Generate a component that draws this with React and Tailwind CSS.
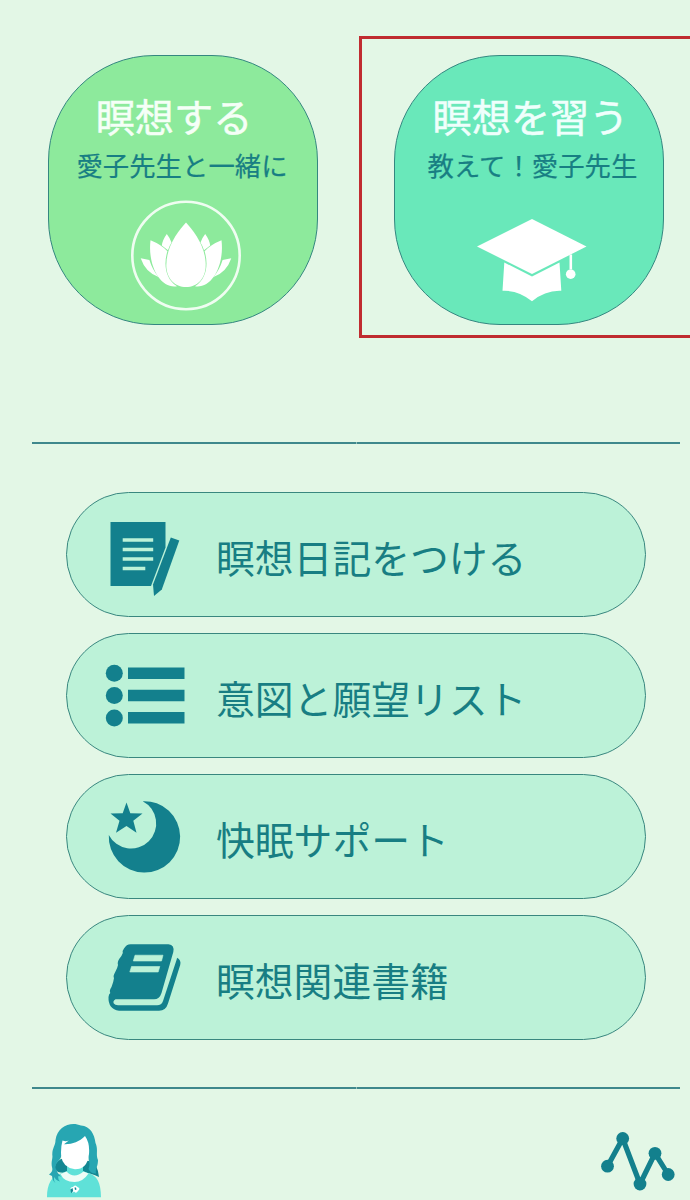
import React from 'react';

function LotusIcon() {
  return (
    <svg className="h-[112px] w-[112px]" viewBox="130 199 112 112" aria-hidden="true">
      <circle cx="186" cy="255.5" r="53.7" fill="none" stroke="#effdf1" strokeWidth="2.6" />
      <g fill="#fff">
        <path d="M140.7 258.3 L149.400 260 Q152.500 270 158.500 277 Q145.500 272.500 140.700 258.300Z" />
        <path d="M231.300 258.300 L222.600 260 Q219.500 270 213.500 277 Q226.500 272.500 231.300 258.300Z" />
        <path d="M166.800 234 Q162.500 240 161.800 245.500 L168 250.300 Q169 246.500 171.500 242.500 Q170 238 166.800 234Z" />
        <path d="M205.200 234 Q209.500 240 210.200 245.500 L204 250.300 Q203 246.500 200.500 242.500 Q202 238 205.200 234Z" />
        <path d="M150.500 240.300 Q161 244.500 167.400 251.200 C163.500 264 165 279 177 286.300 C160 289 147.500 265 150.500 240.300Z" />
        <path d="M221.500 240.300 Q211 244.500 204.600 251.200 C208.500 264 207 279 195 286.300 C212 289 224.500 265 221.500 240.300Z" />
        <path d="M186 222.500 C194 231 205.700 246.500 205.700 265 C205.700 279 197 287 186 287 C175 287 166.300 279 166.300 265 C166.300 246.500 178 231 186 222.500Z" />
      </g>
    </svg>
  );
}

function CapIcon() {
  return (
    <svg className="h-[84px] w-[112px]" viewBox="476 218 112 84" fill="#fff" aria-hidden="true">
      <path d="M532 219 L586.500 246.500 L532 274 L477 246.500Z" />
      <path d="M504.300 262.500 L532 276.500 L559.500 262.500 L561.300 290.800 Q545.500 290 532 301.300 Q518.500 290 502.500 290.800Z" />
      <path d="M569.500 254.500 h2.600 v15 h-2.600Z" />
      <circle cx="570.700" cy="274.200" r="4.800" />
    </svg>
  );
}

function DiaryIcon() {
  return (
    <svg className="h-[80px] w-[84px]" viewBox="104 514 84 80" fill="#13808d" overflow="visible" aria-hidden="true">
      <path d="M110.500 522 H165.500 V547.500 L151 586 H110.500Z" />
      <path d="M122.700 540h30.500M122.700 549.500h30.500M122.700 559h30.500M122.700 568.500h22.600" stroke="#bcf2d8" strokeWidth="3.600" />
      <path d="M170.800 537.500 L179.300 540.500 L161.800 589.500 L154 596 L153 584.500Z" />
    </svg>
  );
}

function ListIcon() {
  return (
    <svg className="h-[80px] w-[84px]" viewBox="104 655.500 84 80" fill="#13808d" aria-hidden="true">
      <circle cx="114.300" cy="673.700" r="8.500" />
      <circle cx="114.300" cy="696" r="8.500" />
      <circle cx="114.300" cy="718.400" r="8.500" />
      <path d="M128 668h56.500v11.500h-56.500zM128 690.300h56.500v11.500h-56.500zM128 712.500h56.500v11.500h-56.500z" />
    </svg>
  );
}

function MoonIcon() {
  return (
    <svg className="h-[80px] w-[84px]" viewBox="104 796.500 84 80" fill="#13808d" aria-hidden="true">
      <path d="M142.700 801.700 A35.700 35.700 0 1 1 108.800 835.500 A25.100 25.100 0 1 0 142.700 801.700Z" />
      <path d="M126.500 803 L130.300 813.700 L142.500 814 L133.300 821.300 L136.500 833.200 L126.500 826.500 L116 833.200 L119.500 821.300 L110.500 814 L122.700 813.700Z" />
    </svg>
  );
}

function BookIcon() {
  return (
    <svg className="h-[80px] w-[84px]" viewBox="104 937 84 80" fill="#13808d" aria-hidden="true">
      <path d="M131 944.200 H168.500 Q174.800 944.800 173.300 952 L161.500 993 Q159.500 999.300 154 999.300 H115.500 Q112.500 1001 113.800 1003.500 Q115 1005.300 118 1005.300 H157 Q161.500 1005.300 163 1001 L176.500 960 Q177 958.500 177 957.700 Q181.500 960 180.200 965 L168 1003.500 Q165.800 1010.800 159 1010.800 H119 Q108 1009 108.500 997 Q108.800 994 110.300 993 Q109 990.500 111.500 987 Q113.500 982 114 978 Q112.800 976 115 972.500 Q117.500 968 118 965 Q117 962 119.500 958.500 Q122 955.500 122.800 953 Q122 951 124 948.500 Q126.500 944 131 944.200Z" />
      <path d="M135 955.200 H163 L161.500 961 H133.300Z M131.500 966.500 H159.800 L158.200 972 H129.800Z" fill="#bcf2d8" stroke="#bcf2d8" strokeWidth=".6" strokeLinejoin="round" />
    </svg>
  );
}

function AvatarIcon() {
  return (
    <svg className="h-[76px] w-[60px]" viewBox="45 1122 60 76" aria-hidden="true">
      <path d="M61 1159 Q54 1163 55 1169 Q58 1174 67 1172.500 H84 Q91 1173 99 1177 Q98 1164 89 1161Z" fill="#138792" />
      <path d="M47 1197.300 C47 1183 52 1176 61 1173.500 L67 1171 V1165 H83 V1171 L88 1173 C97 1175 101 1183 101 1197.300Z" fill="#5fe1d8" />
      <path d="M60.500 1174 L66.500 1171.500 Q74 1179.500 83.500 1171.500 L88.500 1173.500 Q83 1182 74.500 1182 Q64 1182 60.500 1174Z" fill="#effcf6" />
      <path d="M60.500 1141 L68 1133 H84 L89 1142 V1155 Q87 1169.300 75 1169.300 Q63 1168 61 1156Z" fill="#fff" />
      <path d="M62.500 1140.500 Q60.500 1148 61.200 1156 C60.500 1161 55 1162 55.500 1168 Q57 1173 61 1176.500 L58.500 1176 Q57.500 1179 60 1181.500 Q55.500 1180 54.500 1177 Q53 1180 55.500 1183 Q52.500 1181 52 1176 L49 1174.500 Q53 1172 52.200 1168 C50.500 1162 53 1159 52.300 1155 C52 1148 55.500 1146 55.500 1140 C57.500 1126 71 1121 81 1125.500 C90 1126 94.500 1134 95.500 1143 C98.500 1150 95.500 1154 98 1160 C98 1167 95 1169 96 1173.500 Q91 1174 88.500 1169 C91 1163 87.500 1160 89 1154 Q90 1143 85 1136 C79 1142 72 1144.500 64 1144.200 L74.500 1136 Q69 1143 62.500 1140.500Z" fill="#27a6b2" />
      <path d="M70.500 1190 Q70 1187 73 1187 Q75 1184 77.500 1187 Q81 1188 78 1191 Q76 1194 74 1191.500 Q72 1194 70.500 1190Z" fill="#fff" />
      <path d="M70.300 1189.500 l2.200-1.500 .7 3-2 2.300zM74.500 1187.500 l1.500 0 .5 2-1.500.5z" fill="#138792" />
    </svg>
  );
}

function ChartIcon() {
  return (
    <svg className="h-[62px] w-[76px]" viewBox="600 1130 76 62" fill="#13808d" aria-hidden="true">
      <path d="M607.500 1166.200 L622.700 1138.500 L640 1184 L655 1153.300 L668.200 1174.500" fill="none" stroke="#13808d" strokeWidth="5.200" />
      <circle cx="607.500" cy="1166.200" r="6.400" />
      <circle cx="622.700" cy="1138.500" r="6.400" />
      <circle cx="640" cy="1184" r="6.400" />
      <circle cx="655" cy="1153.300" r="6.400" />
      <circle cx="668.200" cy="1174.500" r="6.400" />
    </svg>
  );
}

const menuItems = [
  { label: '瞑想日記をつける', Icon: DiaryIcon },
  { label: '意図と願望リスト', Icon: ListIcon },
  { label: '快眠サポート', Icon: MoonIcon },
  { label: '瞑想関連書籍', Icon: BookIcon },
];

function Divider() {
  return (
    <div className="ml-8 flex h-[2px] w-[648px]">
      <span className="w-[324px] bg-[#3f888c]" />
      <span className="w-px bg-[#8fbfb9]" />
      <span className="flex-1 bg-[#3f888c]" />
    </div>
  );
}

export default function App() {
  return (
    <main className="flex h-[1200px] w-[690px] flex-col overflow-hidden bg-[#e3f7e6] font-['Noto_Sans_CJK_JP',sans-serif] text-[#187e83]">
      <section className="flex h-[442px] items-start pt-9">
        <button className="mt-[19px] ml-12 flex h-[270px] w-[270px] shrink-0 flex-col items-center rounded-[106px] border border-[#348780] bg-[#8dea9c]">
          <span className="mt-[39px] mr-[18px] h-10 whitespace-nowrap text-[39.2px] leading-10 text-[#f5fff7] [-webkit-text-stroke:0.5px]">瞑想する</span>
          <span className="mt-4 mr-[2px] h-7 whitespace-nowrap text-[26.4px] leading-7 [-webkit-text-stroke:0.2px]">愛子先生と一緒に</span>
          <span className="mt-5 mr-[-6px]"><LotusIcon /></span>
        </button>
        <div className="ml-[41px] h-[302px] w-[331px] shrink-0 border-y-[3px] border-l-[3px] border-[#c02c30]">
          <button className="mt-4 ml-8 flex h-[270px] w-[270px] flex-col items-center rounded-[106px] border border-[#348780] bg-[#69e8ba]">
            <span className="mt-[39px] ml-[3px] h-10 whitespace-nowrap text-[39.2px] leading-10 text-[#effffc] [-webkit-text-stroke:0.5px]">瞑想を習う</span>
            <span className="mt-4 ml-[7px] h-7 whitespace-nowrap text-[26.4px] leading-7 [-webkit-text-stroke:0.2px]">教えて！愛子先生</span>
            <span className="mt-[39px] ml-[6px]"><CapIcon /></span>
          </button>
        </div>
      </section>
      <Divider />
      <nav className="mt-[47.5px] ml-[66px] flex w-[580px] flex-col gap-[16px]">
        {menuItems.map(({ label, Icon }) => (
          <button key={label} className="flex h-[125px] items-center rounded-full border border-[#39877f] bg-[#bcf2d8] pl-[37px] text-left">
            <Icon />
            <span className="mt-[3px] ml-7 whitespace-nowrap text-[38.8px] leading-[48px]">{label}</span>
          </button>
        ))}
      </nav>
      <div className="mt-[47.500px]"><Divider /></div>
      <footer className="mt-[33px] flex items-start justify-between pr-[14px] pl-[45px]">
        <AvatarIcon />
        <span className="mt-2"><ChartIcon /></span>
      </footer>
    </main>
  );
}
